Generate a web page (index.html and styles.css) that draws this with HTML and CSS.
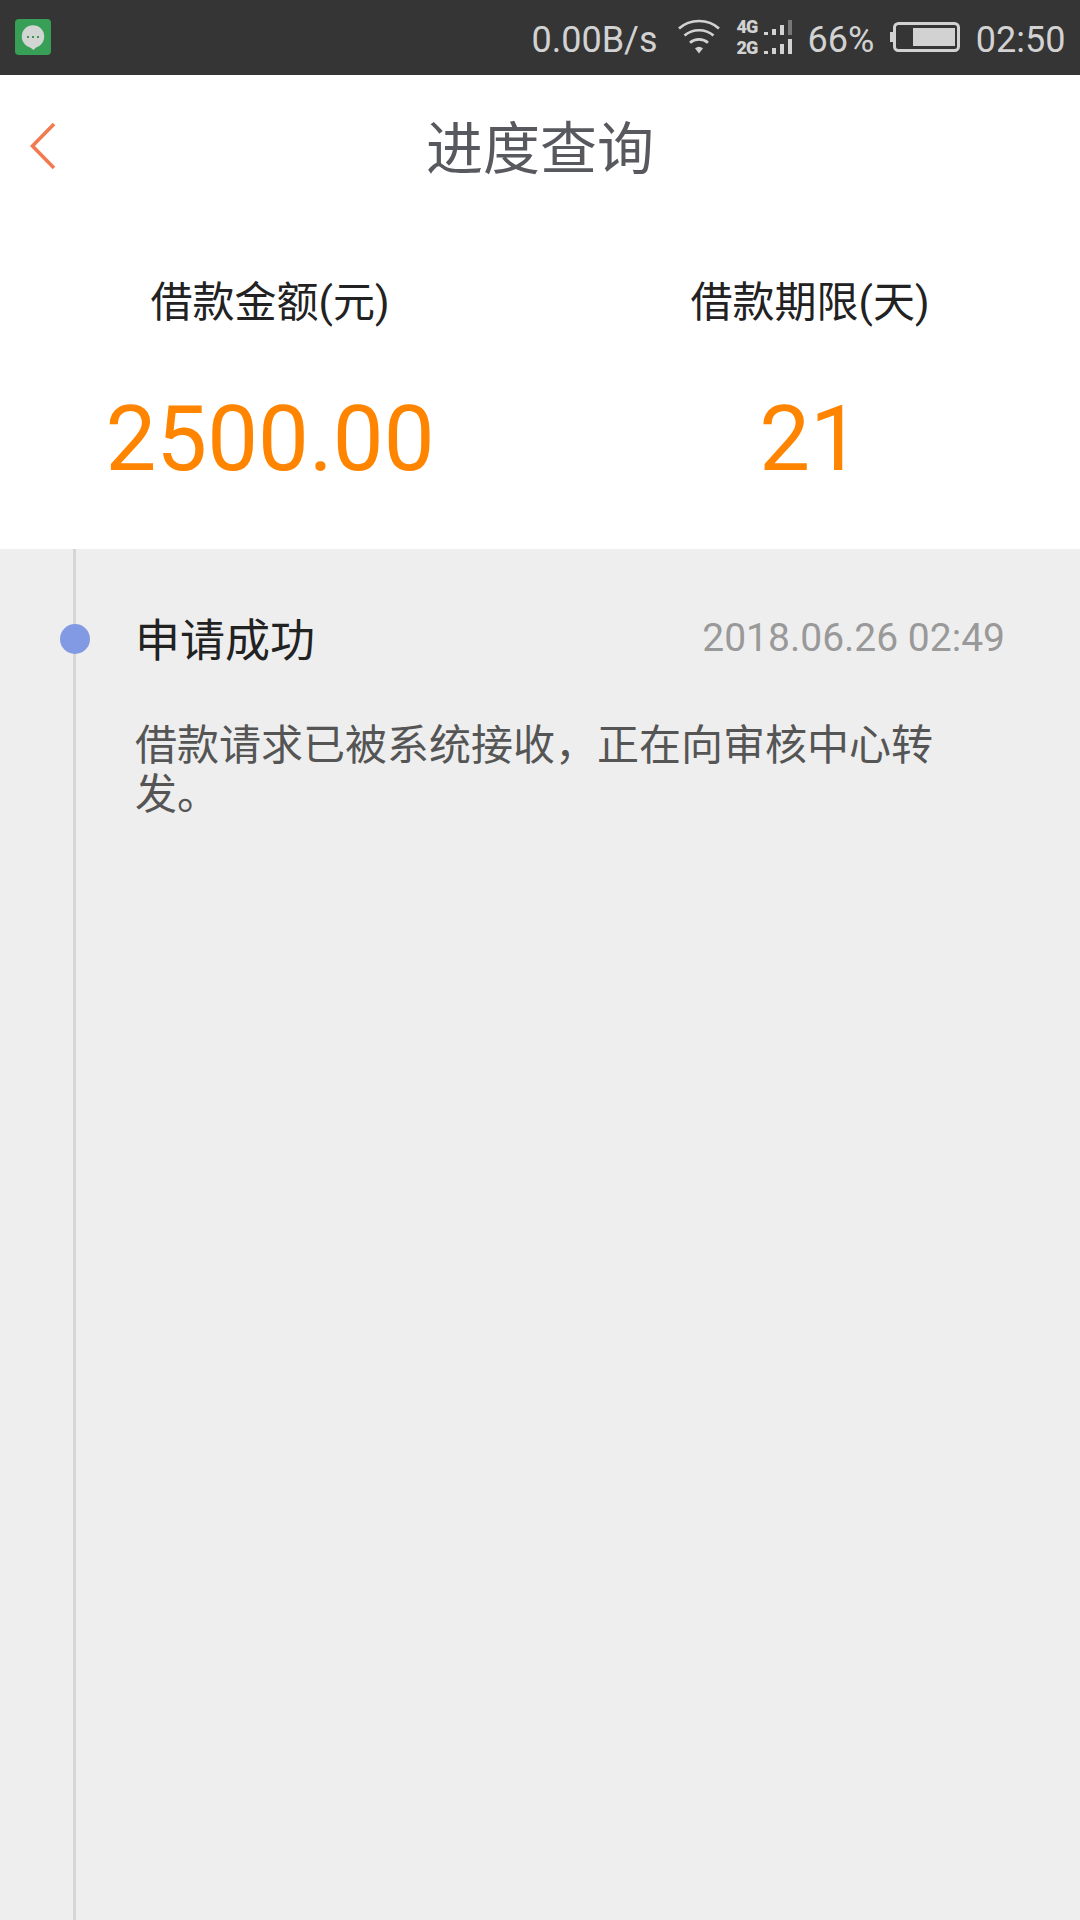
FILE: index.html
```html
<!DOCTYPE html>
<html lang="zh-CN">
<head>
<meta charset="utf-8">
<title>进度查询</title>
<link rel="stylesheet" href="styles.css">
</head>
<body>
<header class="status">
  <svg class="chat" width="36" height="36" viewBox="0 0 36 36"><rect width="36" height="36" rx="4" fill="#38a056"/><circle cx="18" cy="17.500" r="11.200" fill="#d2d5d2"/><path d="M14 27.500h8l-3.500 3.500z" fill="#d2d5d2"/><path d="M12 17h2v2h-2zM17 17h2v2h-2zM22 17h2v2h-2z" fill="#3c9856"/></svg>
  <span class="speed">0.00B/s</span>
  <svg class="wifi" width="42" height="36" viewBox="0 0 42 36" fill="none" stroke="#d2d2d2" stroke-width="2.700"><path d="M1 9.500C12-.5 30-.5 41 9.500M6.500 16.500C14.500 9.500 27.500 9.500 35.500 16.500M12 23.800C17 19.300 25 19.300 30 23.800"/><path d="M17 29.300Q21 26 25 29.300L21 34.500z" fill="#d2d2d2" stroke="none"/></svg>
  <div class="nets"><span>4G</span><span>2G</span></div>
  <svg class="signal" width="28" height="36" viewBox="0 0 28 36" fill="#d2d2d2"><path d="M0 13h4v3H0zM8 10h4v6H8zM16 6h4v10h-4zM0 32h4v3H0zM8 29h4v6H8zM16 25h4v10h-4zM24 20h4v15h-4z"/><path d="M24 1h4v15h-4z" fill="#777"/></svg>
  <span class="percent">66%</span>
  <svg class="battery" width="70" height="30" viewBox="0 0 70 30"><rect x="4.500" y="1.500" width="64" height="27" rx="4" fill="none" stroke="#d2d2d2" stroke-width="3"/><path d="M0 10h4v10H0zM23 6h42v18H23z" fill="#d2d2d2"/></svg>
  <span class="clock">02:50</span>
</header>
<nav class="title-bar">
  <svg class="back" width="28" height="48" viewBox="0 0 28 48"><path d="M24 2L2.500 24 24 46" fill="none" stroke="#f27a50" stroke-width="3.600"/></svg>
  <h1>进度查询</h1>
</nav>
<section class="summary">
  <div class="metric"><p class="label">借款金额(元)</p><p class="value">2500.00</p></div>
  <div class="metric"><p class="label">借款期限(天)</p><p class="value">21</p></div>
</section>
<main class="timeline">
  <div class="rail"><i class="dot"></i></div>
  <article class="event">
    <div class="event-head"><h2>申请成功</h2><time>2018.06.26 02:49</time></div>
    <p class="detail">借款请求已被系统接收，正在向审核中心转发。</p>
  </article>
</main>
</body>
</html>
```
FILE: styles.css
```css
*{box-sizing:border-box}
body{margin:0;width:1080px;height:1920px;display:flex;flex-direction:column;overflow:hidden;background:#fff;font-family:Roboto,"Noto Sans CJK SC",sans-serif}
h1,h2,p{margin:0;font-weight:400}
svg{display:block;flex:none}
.status{height:75px;flex:none;background:#353535;color:#d2d2d2;display:flex;align-items:center;padding:4px 14.500px 0 15px;font-size:36px;white-space:nowrap}
.chat{margin-top:-5px}
.speed{margin-left:auto}
.wifi{margin:-5px 0 0 20px}
.nets{width:22px;margin:-6px 0 0 17px;display:flex;flex-direction:column;font-size:18px;line-height:21px;font-weight:900;letter-spacing:-1px}
.signal{margin:-5px 0 0 5px}
.percent{margin-left:16px}
.battery{margin:-5px 0 0 16px}
.clock{margin-left:15.500px}
.title-bar{height:144px;flex:none;display:grid;grid-template-columns:60px 1fr 60px;align-items:center;color:#58585f}
.back{margin:-2px 0 0 30px}
h1{padding-top:6px;font-size:57px;line-height:80px;text-align:center}
.summary{height:330px;flex:none;display:grid;grid-template-columns:1fr 1fr;text-align:center}
.metric{padding-top:53px}
.label{font-size:42px;line-height:62px;color:#222}
.value{font-size:90.500px;line-height:106px;margin-top:52px;color:#ff8400}
.timeline{flex:1;background:#eee;display:flex}
.rail{width:31px;margin-left:60px;display:flex;padding-top:75px;background:linear-gradient(#d6d6d6,#d6d6d6) 13px 0/3px 100% no-repeat}
.dot{width:30px;height:30px;border-radius:50%;background:#8299e3}
.event{width:870px;margin-left:44px;padding-top:60px}
.event-head{display:flex;justify-content:space-between;align-items:center}
h2{font-size:45px;line-height:66px;color:#222}
time{margin-top:-8px;font-size:39px;color:#999}
.detail{width:820px;margin-top:46px;font-size:42px;line-height:49px;color:#555}
```
